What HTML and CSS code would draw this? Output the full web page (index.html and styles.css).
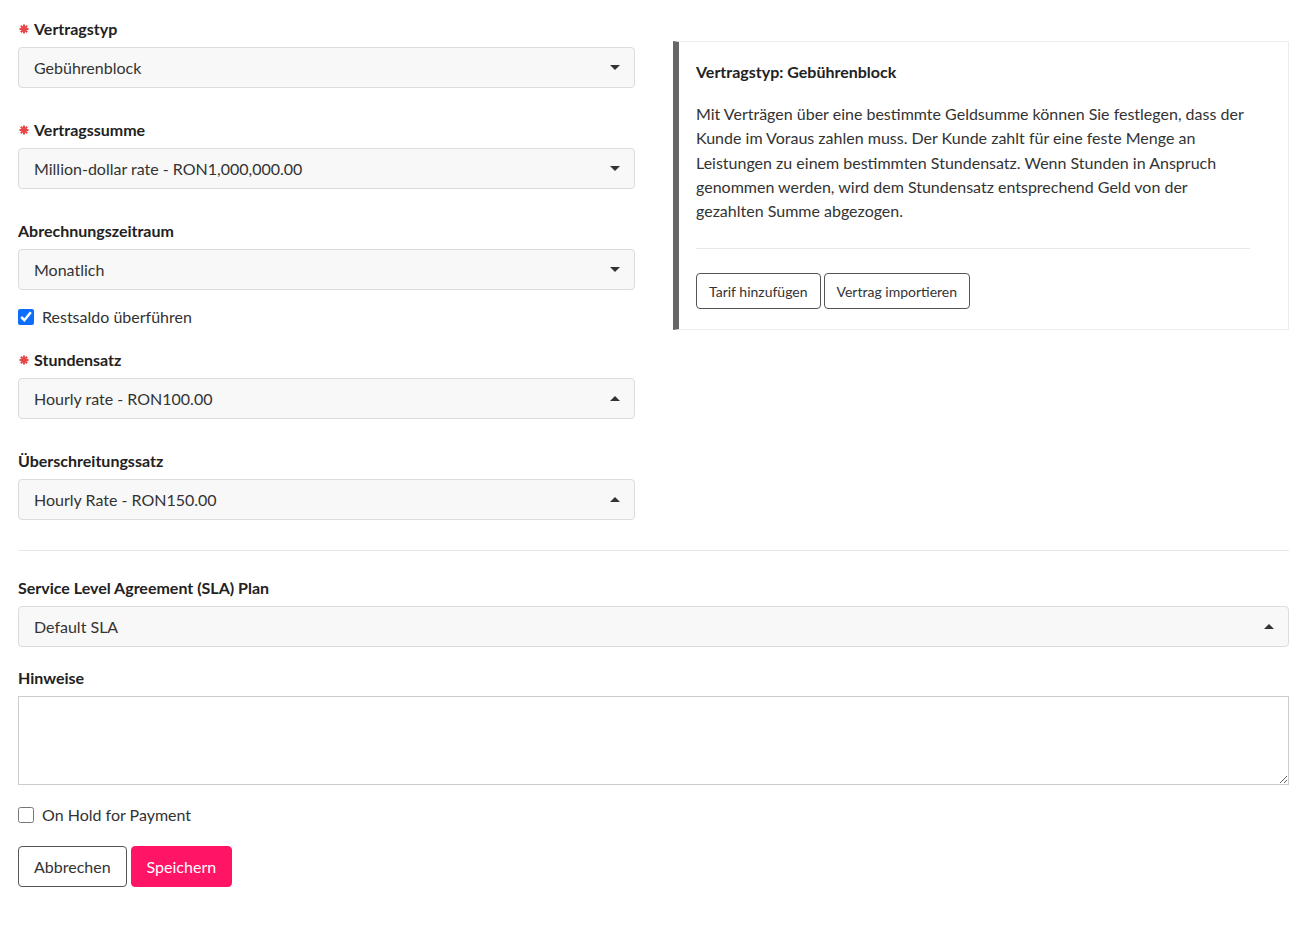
FILE: index.html
```html
<!DOCTYPE html>
<html lang="de">
<head>
<meta charset="utf-8">
<title>Vertrag</title>
<link rel="stylesheet" href="styles.css">
</head>
<body>
<div class="page">
  <div class="top-row">
    <div class="left-col">
      <div class="field">
        <label class="label"><svg class="req" viewBox="0 0 10 10" aria-hidden="true"><path d="M5 0.5V9.5M0.5 5H9.5M1.8 1.8L8.2 8.2M8.2 1.8L1.8 8.2"/></svg>Vertragstyp</label>
        <div class="select"><span>Gebührenblock</span><span class="caret down"></span></div>
      </div>
      <div class="field">
        <label class="label"><svg class="req" viewBox="0 0 10 10" aria-hidden="true"><path d="M5 0.5V9.5M0.5 5H9.5M1.8 1.8L8.2 8.2M8.2 1.8L1.8 8.2"/></svg>Vertragssumme</label>
        <div class="select"><span>Million-dollar rate - RON1,000,000.00</span><span class="caret down"></span></div>
      </div>
      <div class="field field-tight">
        <label class="label">Abrechnungszeitraum</label>
        <div class="select"><span>Monatlich</span><span class="caret down"></span></div>
      </div>
      <label class="check-row check-first"><input type="checkbox" checked><span>Restsaldo überführen</span></label>
      <div class="field">
        <label class="label"><svg class="req" viewBox="0 0 10 10" aria-hidden="true"><path d="M5 0.5V9.5M0.5 5H9.5M1.8 1.8L8.2 8.2M8.2 1.8L1.8 8.2"/></svg>Stundensatz</label>
        <div class="select"><span>Hourly rate - RON100.00</span><span class="caret up"></span></div>
      </div>
      <div class="field field-last">
        <label class="label">Überschreitungssatz</label>
        <div class="select"><span>Hourly Rate - RON150.00</span><span class="caret up"></span></div>
      </div>
    </div>
    <div class="right-col">
      <div class="info-panel">
        <h3 class="info-title">Vertragstyp: Gebührenblock</h3>
        <p class="info-text">Mit Verträgen über eine bestimmte Geldsumme können Sie festlegen, dass der Kunde im Voraus zahlen muss. Der Kunde zahlt für eine feste Menge an Leistungen zu einem bestimmten Stundensatz. Wenn Stunden in Anspruch genommen werden, wird dem Stundensatz entsprechend Geld von der gezahlten Summe abgezogen.</p>
        <hr class="info-rule">
        <div class="info-actions">
          <button class="btn-small">Tarif hinzufügen</button>
          <button class="btn-small">Vertrag importieren</button>
        </div>
      </div>
    </div>
  </div>
  <hr class="divider">
  <div class="field field-sla">
    <label class="label">Service Level Agreement (SLA) Plan</label>
    <div class="select"><span>Default SLA</span><span class="caret up"></span></div>
  </div>
  <div class="field field-tight">
    <label class="label">Hinweise</label>
    <textarea class="textarea"></textarea>
  </div>
  <label class="check-row check-second"><input type="checkbox"><span>On Hold for Payment</span></label>
  <div class="actions">
    <button class="btn btn-outline">Abbrechen</button>
    <button class="btn btn-primary">Speichern</button>
  </div>
</div>
</body>
</html>
```

FILE: styles.css
```css
* { box-sizing: border-box; }
html, body { margin: 0; padding: 0; background: #fff; }
body {
  font-family: "Lato", "Liberation Sans", sans-serif;
  font-size: 16px;
  line-height: 24px;
  color: #333;
}
.page {
  padding: 17px 23px 40px 18px;
}
.top-row {
  display: grid;
  grid-template-columns: 617px 616px;
  column-gap: 38px;
}
.field { display: flex; flex-direction: column; margin-bottom: 30px; }
.field-tight { margin-bottom: 18px; }
.field-sla { margin-bottom: 19px; }
.field-last { margin-bottom: 0; }
.label {
  font-weight: 700;
  color: #222;
  margin-bottom: 6px;
  display: flex;
  align-items: center;
}
.req {
  width: 10px;
  height: 10px;
  margin: 0 5px 0 1px;
  flex: none;
  stroke: #e8474a;
  stroke-width: 2;
  fill: none;
}
.select {
  height: 41px;
  background: #f8f8f8;
  border: 1px solid #dcdcdc;
  border-radius: 4px;
  display: flex;
  align-items: center;
  justify-content: space-between;
  padding: 0 14px 0 15px;
  color: #333;
}
.caret {
  width: 0; height: 0;
  border-left: 5px solid transparent;
  border-right: 5px solid transparent;
}
.caret.down { border-top: 5px solid #333; }
.caret.up { border-bottom: 5px solid #333; }
.check-row {
  display: flex;
  align-items: center;
  gap: 8px;
  color: #333;
}
.check-row input {
  width: 16px; height: 16px;
  margin: 0;
  accent-color: #0d6efd;
}
.check-first { margin: -3px 0 19px; }
.check-second { margin: 0 0 19px; }
.right-col { padding-top: 24px; }
.info-panel {
  border: 1px solid #ececec;
  border-left: 6px solid #666;
  padding: 18px 38px 20px 17px;
  background: #fff;
}
.info-title {
  margin: 0 0 18px;
  font-size: 16px;
  line-height: 24px;
  font-weight: 700;
  color: #222;
}
.info-text { margin: 0; color: #333; line-height: 24.3px; }
.info-rule {
  border: 0;
  border-top: 1px solid #e8e8e8;
  margin: 25px 0 24px;
}
.info-actions { display: flex; gap: 3px; }
.btn-small {
  font-family: inherit;
  font-size: 14px;
  height: 36px;
  padding: 0 12px;
  background: #fff;
  border: 1px solid #555;
  border-radius: 4px;
  color: #333;
}
.divider {
  border: 0;
  border-top: 1px solid #e8e8e8;
  margin: 30px 0 25px;
}
.textarea {
  height: 89px;
  border: 1px solid #ccc;
  border-radius: 0;
  resize: vertical;
  font-family: inherit;
  font-size: 16px;
}
.actions { display: flex; gap: 4px; }
.btn {
  font-family: inherit;
  font-size: 16px;
  height: 41px;
  padding: 0 15px;
  border-radius: 4px;
}
.btn-outline { background: #fff; border: 1px solid #555; color: #333; }
.btn-primary { background: #ff1466; border: 1px solid #ff1466; color: #fff; }
```
